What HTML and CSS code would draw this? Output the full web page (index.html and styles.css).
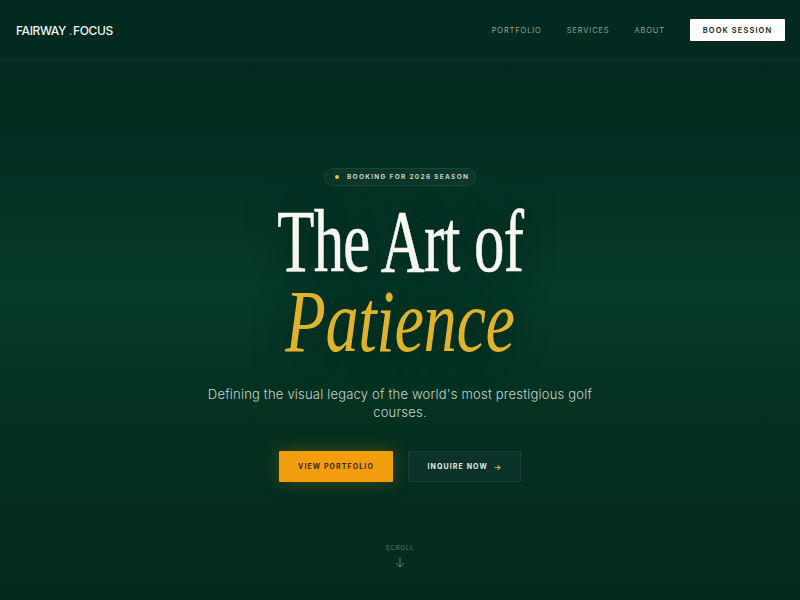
FILE: index.html
```html
<!DOCTYPE html>
<html lang="en">
<head>
<meta charset="utf-8">
<title>Fairway Focus</title>
<link rel="stylesheet" href="styles.css">
</head>
<body>
<header class="nav">
  <div class="logo">FAIRWAY <span class="dot">.</span>FOCUS</div>
  <nav class="links">
    <a class="link" href="#">PORTFOLIO</a>
    <a class="link" href="#">SERVICES</a>
    <a class="link" href="#">ABOUT</a>
    <a class="book" href="#">BOOK SESSION</a>
  </nav>
</header>
<main class="hero">
  <div class="badge"><span class="badge-dot"></span>BOOKING FOR 2026 SEASON</div>
  <h1 class="title">
    <span class="line line-1">The Art of</span>
    <span class="line line-2">Patience</span>
  </h1>
  <p class="sub">Defining the visual legacy of the world's most prestigious golf courses.</p>
  <div class="actions">
    <a class="btn btn-primary" href="#">VIEW PORTFOLIO</a>
    <a class="btn btn-ghost" href="#">INQUIRE NOW <span class="arrow">→</span></a>
  </div>
  <div class="scroll">
    <span class="scroll-label">SCROLL</span>
    <svg class="scroll-icon" width="10" height="11" viewBox="0 0 10 11" fill="none" stroke="currentColor" stroke-width="1">
      <path d="M5 0.5V10M1 6L5 10L9 6"/>
    </svg>
  </div>
</main>
</body>
</html>
```

FILE: styles.css
```css
* { box-sizing: border-box; }
html, body { margin: 0; padding: 0; }
body {
  width: 800px;
  height: 600px;
  overflow: hidden;
  font-family: Inter, "Liberation Sans", sans-serif;
  color: #fff;
  background: linear-gradient(180deg, #022a20 0%, #032c21 20%, #06392a 48%, #04301f 70%, #032a1f 100%);
}
a { text-decoration: none; color: inherit; }

.nav {
  height: 61px;
  display: flex;
  align-items: center;
  justify-content: space-between;
  padding: 0 15px 0 16px;
  border-bottom: 1px solid rgba(255,255,255,0.05);
  background: #022a20;
}
.logo {
  font-size: 12px;
  font-weight: 500;
  letter-spacing: -0.4px;
  color: #f2f4f2;
}
.logo .dot { color: #b9a526; margin: 0 1px 0 0; }
.links {
  display: flex;
  align-items: center;
}
.link {
  font-size: 7.5px;
  letter-spacing: 0.85px;
  color: #8ea79a;
  margin-right: 25px;
}
.book {
  background: #fff;
  color: #14211c;
  font-size: 7.5px;
  font-weight: 600;
  letter-spacing: 1.1px;
  height: 22px;
  width: 95px;
  display: flex;
  align-items: center;
  justify-content: center;
  border-radius: 1px;
}

.hero {
  display: flex;
  flex-direction: column;
  align-items: center;
  padding-top: 107px;
}
.badge {
  height: 18px;
  width: 152px;
  display: flex;
  align-items: center;
  padding-left: 10px;
  border-radius: 9px;
  border: 1px solid rgba(255,255,255,0.07);
  background: rgba(255,255,255,0.03);
  font-size: 6.5px;
  font-weight: 700;
  letter-spacing: 1.3px;
  white-space: nowrap;
  color: #c9d3cc;
}
.badge-dot {
  width: 4px;
  height: 4px;
  border-radius: 50%;
  background: #e4c43a;
  margin-right: 8px;
  flex: none;
}
.title {
  margin: 16px 0 0;
  font-family: "Liberation Serif", "Times New Roman", serif;
  font-weight: 400;
  font-size: 88px;
  line-height: 80px;
  text-align: center;
  text-shadow: 0 0 40px rgba(0,20,12,0.5);
  display: flex;
  flex-direction: column;
  align-items: center;
}
.line { display: block; white-space: nowrap; }
.line-1 {
  color: #f7f7f2;
  transform: scaleX(0.69);
  letter-spacing: -1px;
  -webkit-text-stroke: 0.6px #f7f7f2;
}
.line-2 {
  color: #dfb42c;
  font-style: italic;
  transform: scaleX(0.755);
  letter-spacing: -0.5px;
}
.sub {
  margin: 23px 0 0;
  width: 420px;
  text-align: center;
  font-size: 13px;
  line-height: 18px;
  letter-spacing: 0.2px;
  color: #c8d3cc;
  font-weight: 300;
}
.actions {
  margin-top: 30px;
  display: flex;
  gap: 15px;
}
.btn {
  height: 31px;
  display: flex;
  align-items: center;
  justify-content: center;
  font-size: 7px;
  font-weight: 700;
  letter-spacing: 1.1px;
  border-radius: 1px;
}
.btn-primary {
  width: 114px;
  background: #f29d0e;
  color: #3b2b10;
  box-shadow: 0 0 18px rgba(242,157,14,0.25);
}
.btn-ghost {
  width: 113px;
  background: #0b3228;
  border: 1px solid rgba(255,255,255,0.06);
  color: #e5ebe7;
}
.arrow {
  color: #d8b22c;
  margin-left: 6px;
  font-size: 8px;
  letter-spacing: 0;
}
.scroll {
  margin-top: 62px;
  display: flex;
  flex-direction: column;
  align-items: center;
  color: #5f7f71;
}
.scroll-label {
  font-size: 6px;
  letter-spacing: 0.8px;
}
.scroll-icon {
  margin-top: 6px;
}
```
